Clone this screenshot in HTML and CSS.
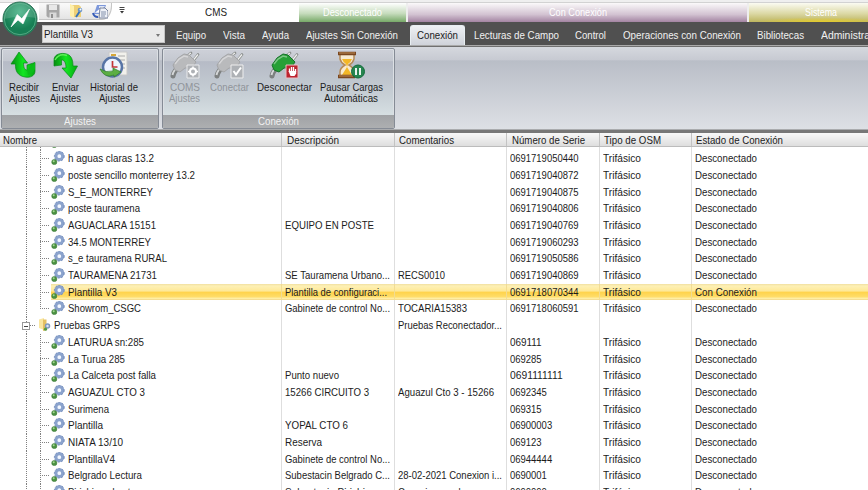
FILE: index.html
```html
<!DOCTYPE html>
<html lang="es">
<head>
<meta charset="utf-8">
<title>CMS</title>
<link rel="stylesheet" href="styles.css">
</head>
<body>
<svg class="defs" width="0" height="0" aria-hidden="true">
  <defs>
    <linearGradient id="green" x1="0" x2="1"><stop offset="0" stop-color="#078c10"/><stop offset=".5" stop-color="#12e622"/><stop offset="1" stop-color="#07a912"/></linearGradient>
    <radialGradient id="orb" cx=".5" cy=".3"><stop stop-color="#43b184"/><stop offset="1" stop-color="#177f54"/></radialGradient>
    <symbol id="gear" viewBox="0 0 14 14">
      <circle cx="8.3" cy="5.2" r="3.4" fill="#f4f8ff" stroke="#8ba3cd" stroke-width="3"/>
      <circle cx="8.3" cy="5.2" r="4.9" fill="none" stroke="#6f8abb" stroke-width="1" stroke-dasharray="1.9 1.7"/>
      <circle cx="3.3" cy="11" r="2.6" fill="#4c9242" stroke="#357532" stroke-width=".5"/>
      <circle cx="2.7" cy="10.2" r="1" fill="#a5d893"/>
    </symbol>
    <symbol id="folder" viewBox="0 0 14 14">
      <path d="M1 1.5 6 0v12L1 10z" fill="#f9e6a0"/><path d="M5 1.500h3.500V12L5 13z" fill="#e4c062"/>
      <circle cx="9.500" cy="8" r="2" fill="#d9e4f3" stroke="#7e97bd" stroke-width="1.5"/><circle cx="7.500" cy="11.200" r="1.600" fill="#559b42"/>
    </symbol>
    <symbol id="plug" viewBox="0 0 30 28">
      <path d="M3 25Q4 19 10 16" fill="none" stroke="#7d8080" stroke-width="5" stroke-linecap="round"/><path d="M2.500 24Q4 18 9 15" fill="none" stroke="#d5d7d8" stroke-width="2"/>
      <path d="M16 6 21 2M23 10 28 3.500" stroke="#8c908e" stroke-width="2.800" stroke-linecap="round"/><path d="M16 5.500 21 2M23 9.500 28 3.500" stroke="#f0f0f0" stroke-width="1.200"/>
      <path class="plug-body" d="M3 14 8 7 14 3 19 4 26 11 22 17 15 17 10 21 5 19z"/>
      <path d="M5 13 9 8 14 5 18 6" fill="none" stroke="#fff" stroke-opacity=".4" stroke-width="1.5"/>
    </symbol>
  </defs>
</svg>
<div class="app">
  <header class="top">
    <div class="orb">
      <svg viewBox="0 0 36 36"><circle cx="18" cy="18" r="17" fill="url(#orb)" stroke="#307359"/><path d="M2 18a16 16 0 0 1 32-1Q18 14 2 18z" fill="#fff" opacity=".14"/><circle cx="18" cy="18" r="15.7" fill="none" stroke="#6bb997" stroke-width=".7"/><path d="M9 26 15.200 13.500 19.800 17.600 27.500 8 21 23 16 19z" fill="#fff" stroke="#fff" stroke-width=".6" stroke-linejoin="round"/></svg>
    </div>
    <div class="titlebar">
      <div class="quick">
        <svg class="q-save" viewBox="0 0 14 14"><path d="M.5.5h13v13H2L.5 12z" fill="#a6a6a6"/><path d="M3 1h8v5H3z" fill="#e8e8e8"/><path d="M3.5 8.500h7V14h-7z" fill="#d9d9d9"/><path d="M5 10h2v4H5z" fill="#8e8e8e"/></svg>
        <svg class="q-folder" viewBox="0 0 14 14"><path d="M1 1h9l2 2v10H3z" fill="#eed076"/><path d="M1 0 5 2v12l-4-2z" fill="#fff0aa"/><path d="m7 13 4-6" stroke="#3674ba" stroke-width="2"/><circle cx="11" cy="6" r="2.3" fill="#6c94c5"/><circle cx="11.500" cy="5.500" r="1" fill="#fff"/></svg>
        <svg class="q-docs" viewBox="0 0 16 15"><path d="M5 1h9l-3 9H2z" fill="#7d98db"/><path d="M7 3h4L5 8h4" fill="none" stroke="#fff" stroke-width="1.500"/><path d="M1 9q1 4 5 4" fill="none" stroke="#365bb6" stroke-width="2"/><path d="M8 4h5l3 3v7H7z" fill="#eef1f7" stroke="#78839c"/><path d="M9 8h5M9 10h5M9 12h4" stroke="#8290aa"/></svg>
      </div>
      <svg class="more" viewBox="0 0 6 7"><path d="M.5.5h5M.5 2.500h5" stroke="#444"/><path d="M1 4h4L3 6.500z" fill="#333"/></svg>
      <div class="app-title"><span data-w="22">CMS</span></div>
      <div class="ctx ctx-green"><span data-w="59">Desconectado</span></div>
      <div class="ctx ctx-purple"><span data-w="58">Con Conexión</span></div>
      <div class="ctx ctx-yellow"><span data-w="32">Sistema</span></div>
    </div>
    <div class="tabbar">
      <div class="combo"><span data-w="49">Plantilla V3</span><i></i></div>
      <nav class="tabs">
        <a class="t1"><span data-w="30">Equipo</span></a>
        <a class="t2"><span data-w="22">Vista</span></a>
        <a class="t3"><span data-w="27">Ayuda</span></a>
        <a class="t4"><span data-w="92">Ajustes Sin Conexión</span></a>
        <a class="active"><span data-w="41">Conexión</span></a>
        <a class="t5"><span data-w="85">Lecturas de Campo</span></a>
        <a class="t6"><span data-w="31">Control</span></a>
        <a class="t7"><span data-w="118">Operaciones con Conexión</span></a>
        <a class="t8"><span data-w="47">Bibliotecas</span></a>
        <a class="t9"><span data-w="68">Administración</span></a>
      </nav>
    </div>
  </header>
  <section class="ribbon">
    <div class="group g-ajustes">
      <div class="buttons">
        <div class="btn b1"><svg viewBox="0 0 30 28"><path d="M10 1 18.500 12H14.500C14.500 17 16 19 18 19V14L26 11.500V20C26 25 21 27 16 26 9 25 6 20 6.500 13H2z" fill="url(#green)" stroke="#078b18" stroke-width=".7"/><path d="m18 19 8-7.500V18q-2 5-7 6z" fill="#0bbd1a"/></svg><span data-w="30">Recibir</span><span data-w="31">Ajustes</span></div>
        <div class="btn b2"><svg viewBox="0 0 30 28"><path d="M4 15V9C4 4 9 2 14 2.500 21 3 23 8 23 15H27.500L21 27 12 17H16C16 11 14 9 11.500 9V14z" fill="url(#green)" stroke="#078b18" stroke-width=".7"/><path d="M5 9q4-7 12-4.500" fill="none" stroke="#5cee57" stroke-width="1.500"/></svg><span data-w="27">Enviar</span><span data-w="31">Ajustes</span></div>
        <div class="btn b3"><svg viewBox="0 0 30 28"><path d="M10 1h18v23H10z" fill="#f2f1ec" stroke="#c8c8c8"/><path d="M19 5h7M20 9h6M22 13h4M22 17h4" stroke="#aaa"/><path d="M12 4h5" stroke="#d6a638" stroke-width="2"/><circle cx="13.500" cy="16" r="9.500" fill="#eef4ff" stroke="#5875a6" stroke-width="2.500"/><path d="M13.500 10v6h5" fill="none" stroke="#c23438" stroke-width="1.700"/><path d="M1 18q6 4 13 2v-3l8 4-7 5v-2Q6 28 1 18z" fill="#5cae43" stroke="#317d2b" stroke-width=".7"/></svg><span data-w="48">Historial de</span><span data-w="31">Ajustes</span></div>
      </div>
      <div class="caption"><span data-w="32">Ajustes</span></div>
    </div>
    <div class="group g-conexion">
      <div class="buttons">
        <div class="btn b4 off"><svg viewBox="0 0 30 28"><use href="#plug"/><path d="M17 14h12v13H17z" fill="#aeb1b5" stroke="#e9eaec"/><circle cx="23" cy="20.500" r="3" fill="none" stroke="#fff" stroke-width="2"/><path d="M23 15.500v2M23 23.500v2M18 20.500h2M26 20.500h2" stroke="#fff" stroke-width="1.500"/></svg><span data-w="30">COMS</span><span data-w="31">Ajustes</span></div>
        <div class="btn b5 off"><svg viewBox="0 0 30 28"><use href="#plug"/><path d="M17 14h12v13H17z" fill="#aeb1b5" stroke="#eee"/><path d="m19.500 20 2.500 3.500 5-7" fill="none" stroke="#fff" stroke-width="2"/></svg><span data-w="39">Conectar</span></div>
        <div class="btn b6"><svg viewBox="0 0 30 28"><use href="#plug"/><path d="M17 14h12v13H17z" fill="#bc2430" stroke="#eabfc3"/><path d="M20.500 21v-3.500M22.500 20v-4M24.500 20v-4M26.500 21v-3" stroke="#fff" stroke-width="1.300"/><path d="M19.500 20h7.700v2.500L25.500 25h-4z" fill="#fff"/></svg><span data-w="55">Desconectar</span></div>
        <div class="btn b7"><svg viewBox="0 0 30 28"><path d="M4 3v5q1 4 5 6-5 3-5 7v4h14v-4q0-4-5-7 4-2 5-6V3z" fill="#f7ead1" stroke="#b58a59" stroke-width="1.500"/><path d="M6 8h10q-1 3-4 5l-1 3-1-3Q7 11 6 8zM11 16l5 8H6z" fill="#f3b727"/><path d="M2 2.500h18M2 25.500h17" stroke="#79461f" stroke-width="3.500"/><path d="M3 2h16M3 25h14" stroke="#be8a55"/><circle cx="22" cy="20.500" r="6.500" fill="#26854f" stroke="#136b3b"/><path d="M20 17v7M24 17v7" stroke="#fff" stroke-width="1.800"/></svg><span data-w="63">Pausar Cargas</span><span data-w="54">Automáticas</span></div>
      </div>
      <div class="caption"><span data-w="41">Conexión</span></div>
    </div>
  </section>
  <main class="grid">
    <div class="row head">
      <div class="cell"><span data-w="34">Nombre</span></div>
      <div class="cell"><span data-w="52">Descripción</span></div>
      <div class="cell"><span data-w="55">Comentarios</span></div>
      <div class="cell"><span data-w="73">Número de Serie</span></div>
      <div class="cell"><span data-w="57">Tipo de OSM</span></div>
      <div class="cell"><span data-w="87">Estado de Conexión</span></div>
    </div>
    <div class="viewport"><div class="rows" id="rows"></div></div>
  </main>
</div>
<script src="app.js"></script>
</body>
</html>
```
FILE: styles.css
```css
* { box-sizing: border-box; }
body { margin: 0; background: #fff; font: 11px/11px "Liberation Sans", Arial, sans-serif; color: #1c1c1c; }
.defs { position: absolute; }
.app { width: 868px; height: 490px; overflow: hidden; display: flex; flex-direction: column; }
span[data-w] { display: inline-block; white-space: nowrap; }

.top { position: relative; flex: none; height: 46px; background: #505050; border-top: 2px solid #efefef; }
.orb { position: absolute; left: 2px; top: -1px; width: 36px; height: 36px; z-index: 2; }
.orb svg { display: block; width: 36px; height: 36px; }
.titlebar { height: 20px; display: flex; background: #fff; border-top: 1px solid #d2d2d2; overflow: hidden; }
.titlebar > * { flex: none; }
.quick { width: 73px; height: 17px; margin-left: 39px; padding: 1px 0 0 7px; display: flex; gap: 9px; background: linear-gradient(#fafafa, #e4e4e4); border: 1px solid #c5c5c5; border-width: 0 1px 1px 0; border-radius: 0 0 10px 0 / 0 0 14px 0; }
.quick svg { flex: none; width: 14px; height: 14px; }
.quick .q-docs { width: 16px; height: 15px; }
.more { width: 6px; height: 7px; margin: 4px 0 0 7px; }
.app-title { width: 174px; padding: 4px 0 0 80px; font-size: 11px; }
.ctx { height: 19px; padding-top: 4px; text-align: center; color: #fff; font-size: 10px; border-right: 2px solid #eee; }
.ctx-green { width: 109px; padding-right: 0; background: linear-gradient(#fff, #c6dcbd 55%, #77a968); }
.ctx-purple { width: 341px; background: linear-gradient(#fbf9fa, #d3c3d2 60%, #a384a2); }
.ctx-yellow { width: 145px; background: radial-gradient(ellipse at 50% 100%, #e6cd2a 0, #e6cd2a00 65%) 0 14px / 145px 5px no-repeat, linear-gradient(#fbfbf2, #dcd9a6 55%, #bdb55f); }
.tabbar { height: 24px; display: flex; border-bottom: 1px solid #a9a9a9; background: #505050; }
.combo { flex: none; position: relative; width: 123px; height: 18px; margin: 3px 0 0 42px; padding: 3px 1px; background: #e9e9e9; border: 1px solid #c4c4c4; line-height: 10px; }
.combo i { position: absolute; right: 4px; top: 8px; border: 2.500px solid transparent; border-top: 3px solid #777; border-bottom: 0; }
.tabs { display: flex; padding-top: 3px; color: #f0f0f0; }
.tabs a { flex: none; height: 20px; padding: 5px 0 0; }
.t1 { margin-left: 11px; }
.t2 { margin-left: 17px; }
.t3 { margin-left: 17px; }
.t4 { margin-left: 17px; }
.tabs .active { width: 55px; margin-left: 11.500px; padding-left: 6px; background: linear-gradient(#eef0f3, #cfd3da); color: #222; border: 1px solid #e8eef2; border-bottom: 0; border-radius: 3px 3px 0 0; padding-top: 4px; }
.t5 { margin-left: 9.500px; }
.t6 { margin-left: 16px; }
.t7 { margin-left: 17px; }
.t8 { margin-left: 16px; }
.t9 { margin-left: 17px; }

.ribbon { flex: none; height: 87px; padding: 1px 0 0 1px; display: flex; gap: 3px; background: linear-gradient(#d5d8de 0, #c7cad2 15%, #b9bec7 16%, #c4c8d0 40%, #dde0e5 82px, #777 83px, #777 100%); border-top: 1px solid #707070; }
.group { height: 81px; display: flex; flex-direction: column; border: 1px solid #858b95; border-radius: 2px; box-shadow: inset 0 0 0 1px #dce0e4; background: linear-gradient(#ced1d9 0, #c4c8d0 15%, #b6bbc6 16%, #c8d0d6 60%, #d7e0e3 67px); overflow: hidden; }
.g-ajustes { width: 158px; }
.g-conexion { width: 233px; }
.buttons { flex: 1; display: flex; padding: 2px 0 0 2px; }
.g-conexion .buttons { padding-left: 1px; }
.btn { height: 60px; display: flex; flex-direction: column; align-items: center; }
.btn svg { width: 30px; height: 28px; margin-bottom: 3px; }
.btn span { height: 11px; }
.b1 { width: 40px; }
.b2 { width: 42px; }
.b3 { width: 56px; }
.b4 { width: 41px; }
.b5 { width: 48px; }
.b6 { width: 62px; }
.b7 { width: 72px; }
.btn { --plug: #26a036; --plug-edge: #16722a; }
.off { --plug: #b9babc; --plug-edge: #a4a5a7; color: #90949a; }
.plug-body { fill: var(--plug); stroke: var(--plug-edge); }
.caption { flex: none; height: 13px; padding-top: 1px; text-align: center; color: #f2f2f2; background: linear-gradient(#a0a2a5, #adafb1); }

.grid { flex: 1; min-height: 0; display: flex; flex-direction: column; }
.row { display: grid; grid-template-columns: 281px 112.500px 112.500px 92.500px 92px 177.500px; height: 16.710px; }
.cell { min-width: 0; border-left: 1px solid #dedede; padding: 3px 0 0 3px; white-space: nowrap; }
.cell:first-child { border-left: 0; }
.head { flex: none; height: 14px; background: linear-gradient(#f8f8f8, #dedede); border-bottom: 1px solid #bcbcbc; }
.head .cell { padding: 2px 0 0 4.500px; border-color: #c3c3c3; }
.head .cell:first-child { padding-left: 3px; }
.viewport { flex: 1; min-height: 0; overflow: hidden; }
.rows { margin-top: -13.600px; }
.row .tree { position: relative; display: flex; padding: 0; }
.trunk, .branch { flex: none; height: 100%; background: repeating-linear-gradient(#808080 0 1px, transparent 1px 2px) 0 0 / 1px 100% no-repeat; }
.trunk { width: 14px; margin-left: 25.500px; }
.branch { width: 11.500px; background: repeating-linear-gradient(#808080 0 1px, transparent 1px 2px) 0 0 / 1px 100% no-repeat, repeating-linear-gradient(90deg, #808080 0 1px, transparent 1px 2px) 0 50% / 9px 1px no-repeat; }
.last .branch { background-size: 1px 50%, 9px 1px; }
.tree svg { flex: none; width: 14px; height: 14px; margin-top: 1px; }
.tree .label { padding: 3px 0 0 3px; }
.item { flex: none; display: flex; height: 100%; }
.selected .item { width: 230px; }
.selected .item, .selected .cell:not(.tree) { background: linear-gradient(#f1dfa0 0, #fdf0b5 2px, #ffe896 45%, #ffd34a 50%, #ffdc67 78%, #fff0ab 92%, #eed184); }
.selected .cell:not(.tree) { border-left-color: #f2dc93; }
.parent .trunk { background: repeating-linear-gradient(#808080 0 1px, transparent 1px 2px) 0 0 / 1px 100% no-repeat, repeating-linear-gradient(90deg, #808080 0 1px, transparent 1px 2px) 0 50% / 9px 1px no-repeat; width: 12px; }
.parent .label { padding-left: 2.500px; }
.toggle { position: absolute; left: 22px; top: 5px; width: 8px; height: 8px; border: 1px solid #999; background: linear-gradient(#444, #444) 1px 50% / 4px 1px no-repeat #fff; }
```
FILE: app.js
```js
// Each row: name, width, description, width, comments, width, serial
const D = [
  ["Aguas claras", 60, "", 0, "", 0, "0691719050441"],
  ["h aguas claras 13.2", 86, "", 0, "", 0, "0691719050440"],
  ["poste sencillo monterrey 13.2", 127, "", 0, "", 0, "0691719040872"],
  ["S_E_MONTERREY", 85, "", 0, "", 0, "0691719040875"],
  ["poste tauramena", 72, "", 0, "", 0, "0691719040806"],
  ["AGUACLARA 15151", 88, "EQUIPO EN POSTE", 89, "", 0, "0691719040769"],
  ["34.5 MONTERREY", 83, "", 0, "", 0, "0691719060293"],
  ["s_e tauramena RURAL", 99, "", 0, "", 0, "0691719050586"],
  ["TAURAMENA 21731", 89, "SE Tauramena Urbano...", 105, "RECS0010", 47, "0691719040869"],
  ["Plantilla V3", 49, "Plantilla de configuraci...", 102, "", 0, "0691718070344"],
  ["Showrom_CSGC", 73, "Gabinete de control No...", 105, "TOCARIA15383", 69, "0691718060591"],
  ["Pruebas GRPS", 66, "", 0, "Pruebas Reconectador...", 104, ""],
  ["LATURUA sn:285", 76, "", 0, "", 0, "069111"],
  ["La Turua 285", 57, "", 0, "", 0, "069285"],
  ["La Calceta post falla", 88, "Punto nuevo", 54, "", 0, "0691111111"],
  ["AGUAZUL CTO 3", 77, "15266 CIRCUITO 3", 84, "Aguazul Cto 3 - 15266", 96, "0692345"],
  ["Surimena", 41, "", 0, "", 0, "069315"],
  ["Plantilla", 35, "YOPAL CTO 6", 63, "", 0, "06900003"],
  ["NIATA 13/10", 55, "Reserva", 37, "", 0, "069123"],
  ["PlantillaV4", 47, "Gabinete de control No...", 105, "", 0, "06944444"],
  ["Belgrado Lectura", 74, "Subestacin Belgrado C...", 105, "28-02-2021 Conexion i...", 104, "0690001"],
  ["Pirichigua Lectura", 76, "Subestacin Pirichigua...", 105, "Conexion con la nueva...", 104, "0690000"]
];
const SEL = 9, LAST = 10, PARENT = 11;
const text = (t, w) => t ? `<span data-w="${w}">${t}</span>` : "";
const cell = (t, w) => `<div class="cell">${text(t, w)}</div>`;

document.getElementById("rows").innerHTML = D.map((r, i) => {
  const parent = i === PARENT;
  const cls = ["row", i === SEL && "selected", i === LAST && "last", parent && "parent"].filter(Boolean).join(" ");
  const lead = parent ? '<i class="trunk"></i><i class="toggle"></i>' : '<i class="trunk"></i><i class="branch"></i>';
  const icon = `<svg><use href="#${parent ? "folder" : "gear"}"/></svg>`;
  // The first row is scrolled under the header: only the foot of its icon shows
  const label = i === 0 ? "" : text(r[0], r[1]);
  const rest = i === 0 ? cell("").repeat(5) :
    cell(r[2], r[3]) + cell(r[4], r[5]) + cell(r[6], r[6].length * 5.27) +
    cell(parent ? "" : "Trifásico", 38) +
    cell(parent ? "" : i === SEL ? "Con Conexión" : "Desconectado", 62);
  return `<div class="${cls}"><div class="cell tree">${lead}<div class="item">${icon}<div class="label">${label}</div></div></div>${rest}</div>`;
}).join("");

document.querySelectorAll("span[data-w]").forEach(s => {
  const natural = s.getBoundingClientRect().width;
  const w = +s.dataset.w;
  s.style.width = w + "px";
  s.style.transformOrigin = "0 0";
  s.style.transform = `scaleX(${(w / natural).toFixed(4)})`;
});
```
